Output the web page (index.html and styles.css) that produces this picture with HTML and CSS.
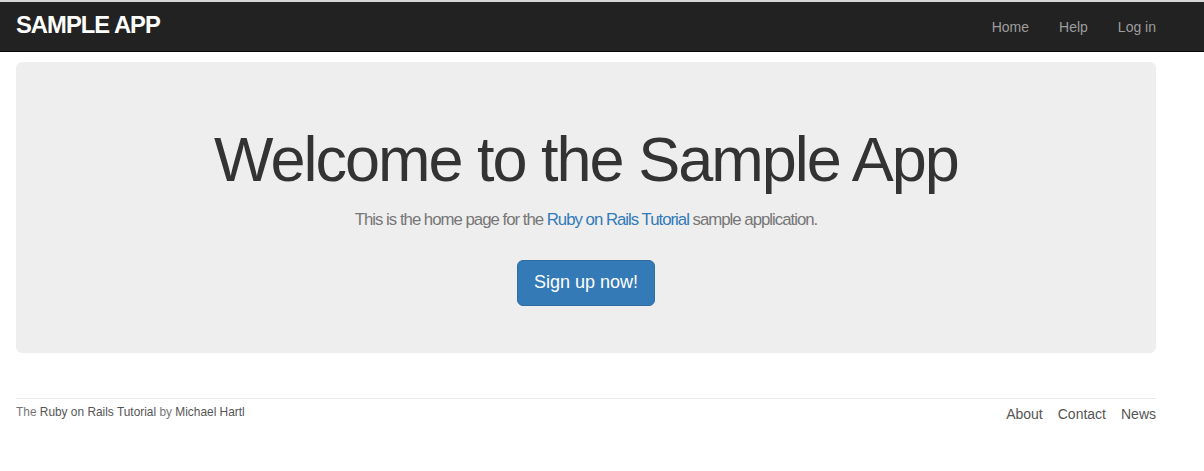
FILE: index.html
```html
<!DOCTYPE html>
<html>
<head>
<meta charset="utf-8">
<title>Sample App</title>
<link rel="stylesheet" href="styles.css">
</head>
<body>
<div class="topline"></div>
<header class="navbar">
  <div class="container nav-inner">
    <a class="logo" href="#">Sample App</a>
    <nav class="nav-links">
      <a href="#">Home</a>
      <a href="#">Help</a>
      <a href="#">Log in</a>
    </nav>
  </div>
</header>
<main class="container">
  <div class="jumbotron">
    <h1>Welcome to the Sample App</h1>
    <h2>This is the home page for the <a href="#">Ruby on Rails Tutorial</a> sample application.</h2>
    <a class="btn" href="#">Sign up now!</a>
  </div>
  <footer class="footer">
    <small>The <a href="#">Ruby on Rails Tutorial</a> by <a href="#">Michael Hartl</a></small>
    <ul>
      <li><a href="#">About</a></li>
      <li><a href="#">Contact</a></li>
      <li><a href="#">News</a></li>
    </ul>
  </footer>
</main>
</body>
</html>
```
FILE: styles.css
```css
* { box-sizing: border-box; }
html, body { margin: 0; padding: 0; }
body {
  font-family: "Liberation Sans", Arial, sans-serif;
  font-size: 14px;
  line-height: 1.42857;
  color: #333;
  background: #fff;
}
a { text-decoration: none; }
.topline { height: 2px; background: #d8d8d8; }
.container { width: 1140px; margin-left: 16px; }
.navbar {
  background: #222;
  border-bottom: 1px solid #080808;
  height: 50px;
}
.nav-inner {
  display: flex;
  justify-content: space-between;
  align-items: stretch;
  height: 49px;
}
.logo {
  color: #fff;
  text-transform: uppercase;
  font-weight: bold;
  font-size: 23.8px;
  letter-spacing: -1px;
  padding-top: 11px;
  line-height: 1;
}
.nav-links { display: flex; margin-right: 0; }
.nav-links a {
  color: #9d9d9d;
  padding: 15px 15px;
  line-height: 20px;
}
.nav-links a:last-child { padding-right: 0; }
.jumbotron {
  margin-top: 10px;
  background: #eee;
  border-radius: 6px;
  padding: 48px 60px;
  text-align: center;
  height: 291px;
}
.jumbotron h1 {
  margin: 15px 0 17px;
  font-size: 63px;
  font-weight: normal;
  letter-spacing: -2px;
  line-height: 1.1;
  color: #333;
}
.jumbotron h2 {
  margin: 0 0 30px;
  font-size: 16.8px;
  font-weight: normal;
  letter-spacing: -1px;
  line-height: 1.1;
  color: #777;
}
.jumbotron h2 a { color: #337ab7; }
.btn {
  display: inline-block;
  padding: 10px 16px;
  font-size: 18px;
  line-height: 1.3333;
  border-radius: 6px;
  color: #fff;
  background: #337ab7;
  border: 1px solid #2e6da4;
}
.footer {
  margin-top: 45px;
  padding-top: 5px;
  border-top: 1px solid #eaeaea;
  color: #777;
  display: flex;
  justify-content: space-between;
  align-items: flex-start;
}
.footer small { font-size: 85%; }
.footer a { color: #555; }
.footer ul {
  list-style: none;
  margin: 0;
  padding: 0;
  display: flex;
  gap: 15px;
  margin-top: 1px;
}
```
